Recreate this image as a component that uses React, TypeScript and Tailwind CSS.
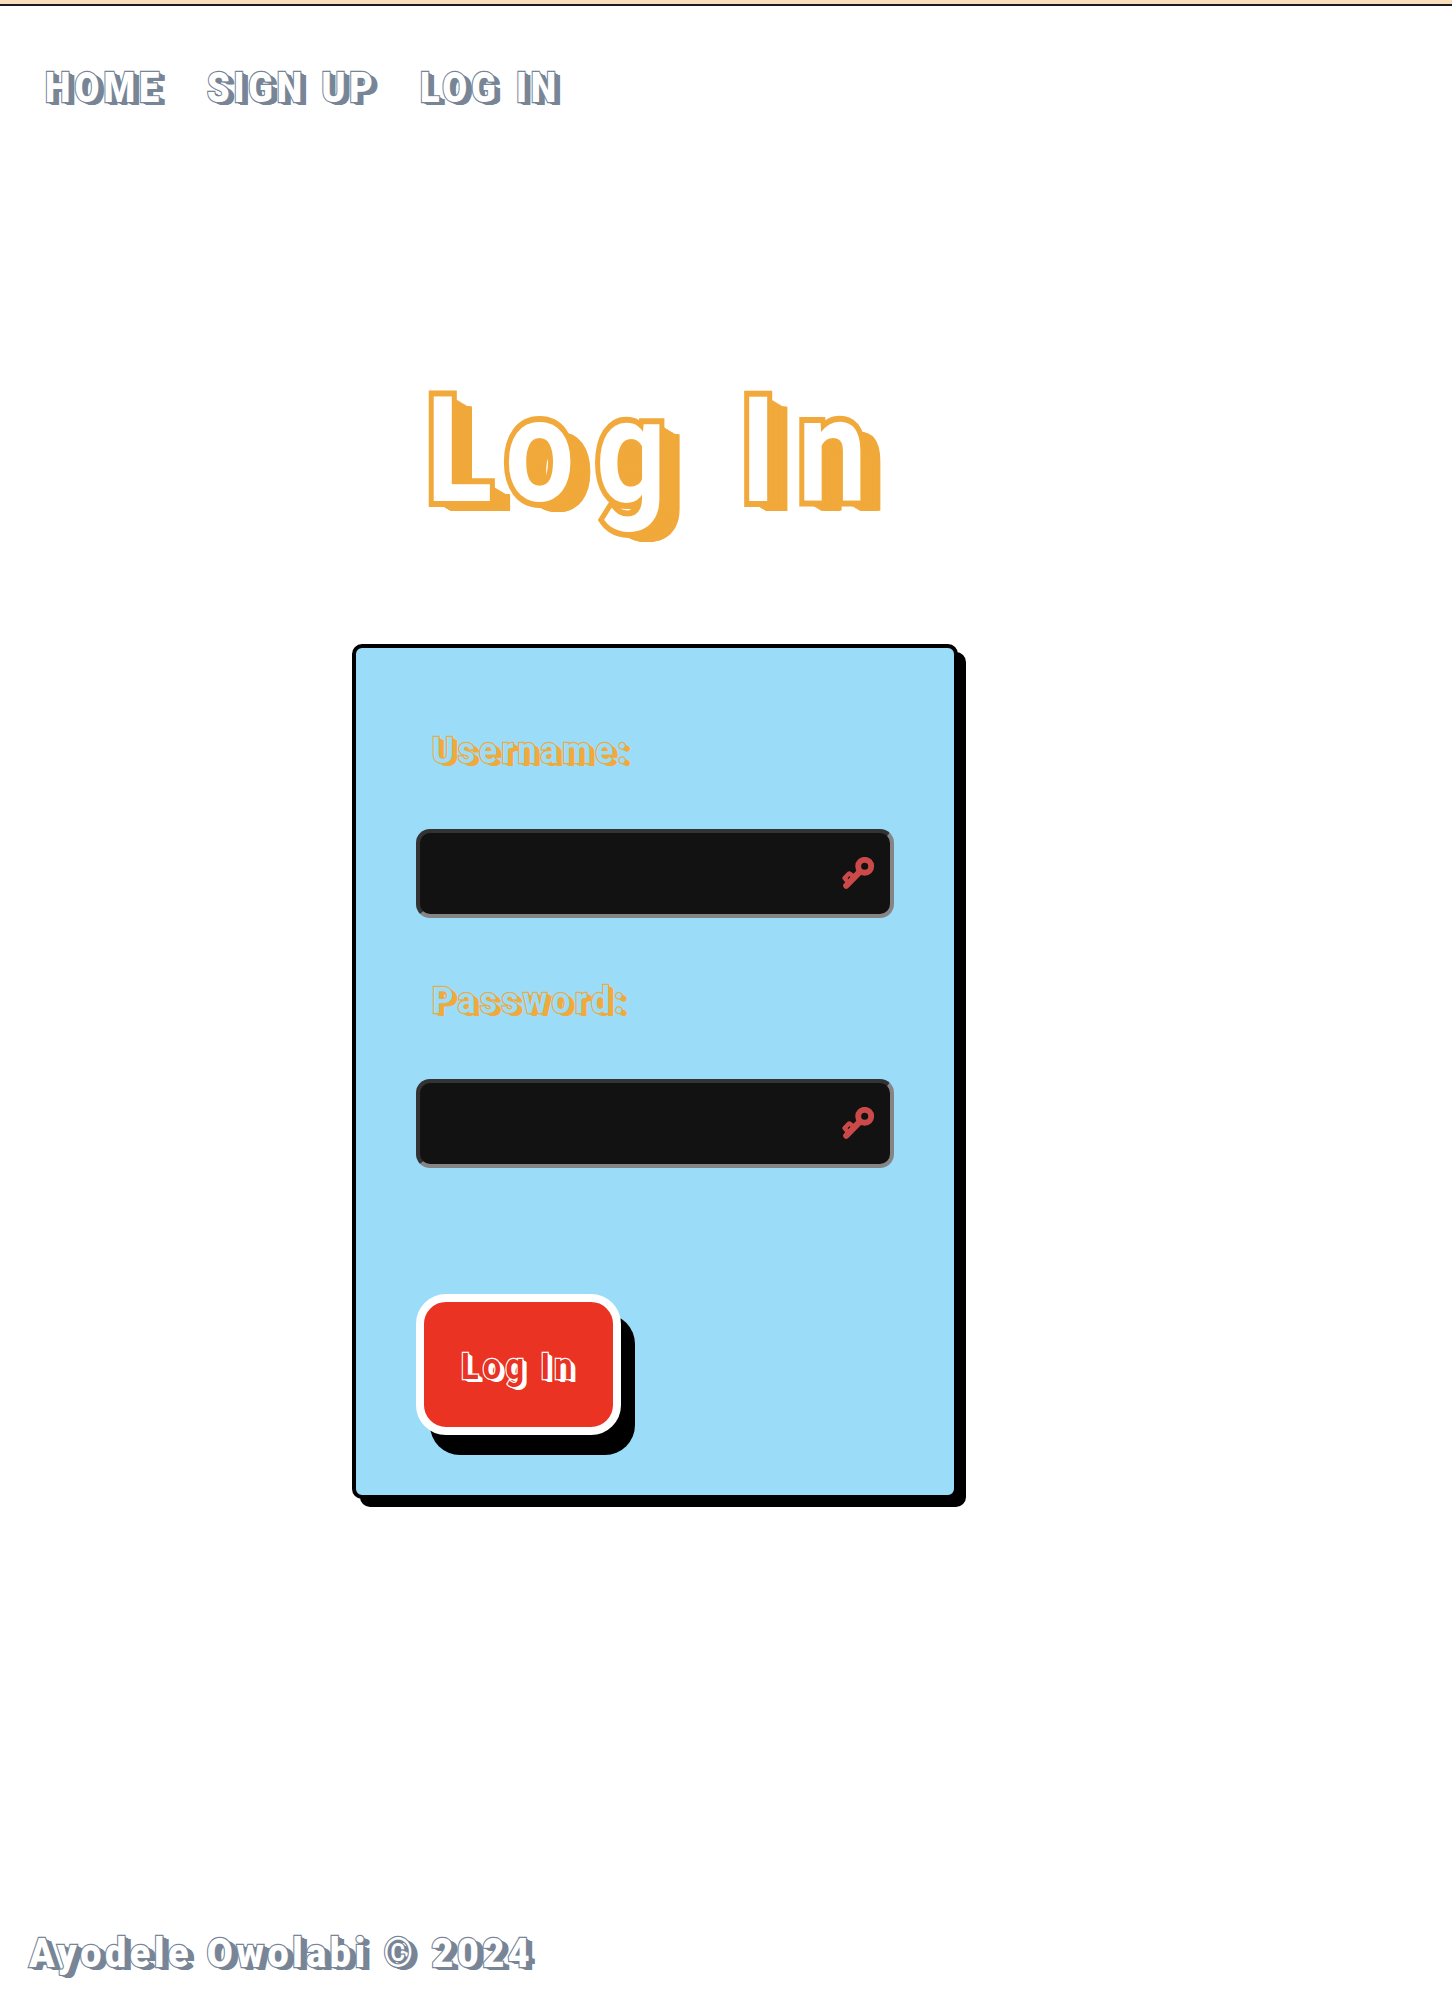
import type { ReactNode } from "react";

const heavy =
  "inline-block origin-left whitespace-nowrap font-['Roboto',sans-serif] leading-none [paint-order:stroke_fill]";

const slateShade =
  "font-black text-white [-webkit-text-stroke:2.4px_#778596] [text-shadow:1px_0.5px_0_#778596,2px_1px_0_#778596,3px_1.5px_0_#778596,4px_2px_0_#778596,5px_2.5px_0_#778596,6px_3px_0_#778596,6.8px_3.4px_0_#778596]";

const orangeShade =
  "font-bold text-[#9bddf9] [-webkit-text-stroke:2.4px_#f1a93b] [text-shadow:1px_0.5px_0_#f1a93b,2px_1px_0_#f1a93b,3px_1.5px_0_#f1a93b,4px_2px_0_#f1a93b,5px_2.5px_0_#f1a93b,5.6px_2.5px_0_#f1a93b]";

const whiteShade =
  "font-bold text-[#ea3323] [-webkit-text-stroke:2.6px_#fff] [text-shadow:1px_0.5px_0_#fff,2px_1px_0_#fff,3px_1.5px_0_#fff,4px_2px_0_#fff,5px_2.5px_0_#fff]";

const titleShade =
  "font-bold text-white [-webkit-text-stroke:12px_#f1a93b] [text-shadow:1px_0.5px_0_#f1a93b,2px_1px_0_#f1a93b,3px_1.5px_0_#f1a93b,4px_2px_0_#f1a93b,5px_2.5px_0_#f1a93b,6px_3px_0_#f1a93b,7px_3.5px_0_#f1a93b,8px_4px_0_#f1a93b,9px_4.5px_0_#f1a93b,10px_5px_0_#f1a93b,11px_5.5px_0_#f1a93b,12px_6px_0_#f1a93b,13px_6.5px_0_#f1a93b,14px_7px_0_#f1a93b,15px_7.5px_0_#f1a93b,16px_8px_0_#f1a93b,17px_8.5px_0_#f1a93b,18px_9px_0_#f1a93b,19px_9.5px_0_#f1a93b,20px_10px_0_#f1a93b,21px_10px_0_#f1a93b,22px_10px_0_#f1a93b,23px_10px_0_#f1a93b,24px_10px_0_#f1a93b]";

function KeyIcon() {
  return (
    <svg width="33" height="33" viewBox="0 0 33 33" fill="none" stroke="#cb4a49">
      <circle cx="22.7" cy="9.3" r="6.5" strokeWidth="5.9" />
      <path d="M17.5 15 4.3 28.7" strokeWidth="6.2" strokeLinecap="round" />
      <path d="M5.5 24.5 2.6 21 7.2 16.4 11 19" strokeWidth="4.4" strokeLinejoin="round" />
    </svg>
  );
}

function Field({ label, className }: { label: ReactNode; className: string }) {
  return (
    <label className={className}>
      <div className="h-[97px] pl-[16px]">{label}</div>
      <div className="flex h-[89px] w-[478px] items-center justify-end rounded-[14px] border-4 border-t-[#333333] border-l-[#333333] border-r-[#858585] border-b-[#858585] bg-[#121212] pr-[15px]">
        <KeyIcon />
      </div>
    </label>
  );
}

export default function App() {
  return (
    <div className="flex h-[1990px] w-[1452px] flex-col overflow-hidden bg-white">
      <div className="h-[6px] shrink-0 border-b-2 border-[#1c1b1f] bg-[#fadfbc]" />
      <nav className="flex h-[120px] shrink-0 pt-[61px] pl-[45px]">
        <a className="w-[162px]"><span className={`${heavy} ${slateShade} scale-x-[0.86] text-[42px] tracking-[4.7px]`}>HOME</span></a>
        <a className="w-[213px]"><span className={`${heavy} ${slateShade} scale-x-[0.86] text-[42px] tracking-[4.5px] [word-spacing:3px]`}>SIGN UP</span></a>
        <a><span className={`${heavy} ${slateShade} scale-x-[0.86] text-[42px] tracking-[4.5px] [word-spacing:4px]`}>LOG IN</span></a>
      </nav>
      <main className="flex h-[1800px] shrink-0 flex-col pl-[352px]">
        <h1 className="h-[518px] pt-[253px] pl-[74px]">
          <span className={`${heavy} ${titleShade} scale-x-[0.84] text-[146px] tracking-[26px]`}>
            <span className="tracking-[15px]">L</span>og In
          </span>
        </h1>
        <form className="h-[855px] w-[606px] shrink-0 rounded-[10px] border-4 border-black bg-[#9bddf9] pl-[60px] shadow-[8px_8px_0_#000]">
          <Field className="block h-[250px] pt-[84px]" label={<span className={`${heavy} ${orangeShade} scale-x-[0.9] text-[37px] tracking-[4.6px]`}>Username:</span>} />
          <Field className="block h-[396px] pt-[84px]" label={<span className={`${heavy} ${orangeShade} scale-x-[0.9] text-[37px] tracking-[4.9px]`}>Password:</span>} />
          <button type="button" className="flex h-[141px] w-[205px] items-start rounded-[30px] border-8 border-white bg-[#ea3323] pt-[46px] pl-[37px] shadow-[14px_20px_0_#000]">
            <span className={`${heavy} ${whiteShade} scale-x-[0.88] text-[37px] tracking-[4.8px]`}>Log In</span>
          </button>
        </form>
      </main>
      <footer className="pt-[7px] pl-[29px]">
        <span className={`${heavy} ${slateShade} scale-x-[0.92] text-[41px] tracking-[3.9px] [word-spacing:2px]`}>Ayodele Owolabi © 2024</span>
      </footer>
    </div>
  );
}
